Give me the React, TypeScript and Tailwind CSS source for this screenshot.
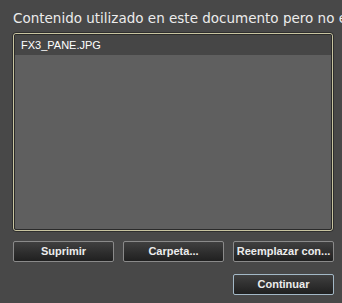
export default function App() {
  const buttonClass =
    'h-[21px] w-[101px] rounded-[2px] border border-[#8a8a8a] bg-gradient-to-b from-[#404040] to-[#202020] text-[11px] font-bold text-[#ececec] leading-none'

  return (
    <div className="h-[303px] w-[342px] overflow-hidden bg-[#484848] font-['Liberation_Sans',sans-serif]">
      <div className="overflow-hidden whitespace-nowrap pl-[13px] pt-[9px] font-['DejaVu_Sans',sans-serif] text-[13.5px] leading-[19px] text-[#ececec]">
        Contenido utilizado en este documento pero no está disponible
      </div>

      {/* File list */}
      <div className="ml-[12px] mt-[4px] h-[200px] w-[322px] rounded-[4px] border border-[#2e2e2e]">
        <div className="h-full w-full rounded-[3px] border border-[#c8c4a0]">
          <div className="h-full w-full overflow-hidden rounded-[2px] border border-[#2a2a2a] bg-[#5f5f5f]">
            <div className="h-[20px] bg-[#464646] pl-[6px] text-[11px] leading-[20px] text-white">FX3_PANE.JPG</div>
          </div>
        </div>
      </div>

      {/* Buttons */}
      <div className="ml-[13px] mt-[9px] flex gap-[9px]">
        <button className={buttonClass}>Suprimir</button>
        <button className={buttonClass}>Carpeta...</button>
        <button className={buttonClass}>Reemplazar con...</button>
      </div>
      <div className="ml-[233px] mt-[9px]">
        <button className="h-[21px] w-[101px] rounded-[2px] border border-[#a3b8c6] bg-gradient-to-b from-[#404040] to-[#202020] text-[11px] font-bold leading-none text-[#ececec]">
          Continuar
        </button>
      </div>
    </div>
  )
}
